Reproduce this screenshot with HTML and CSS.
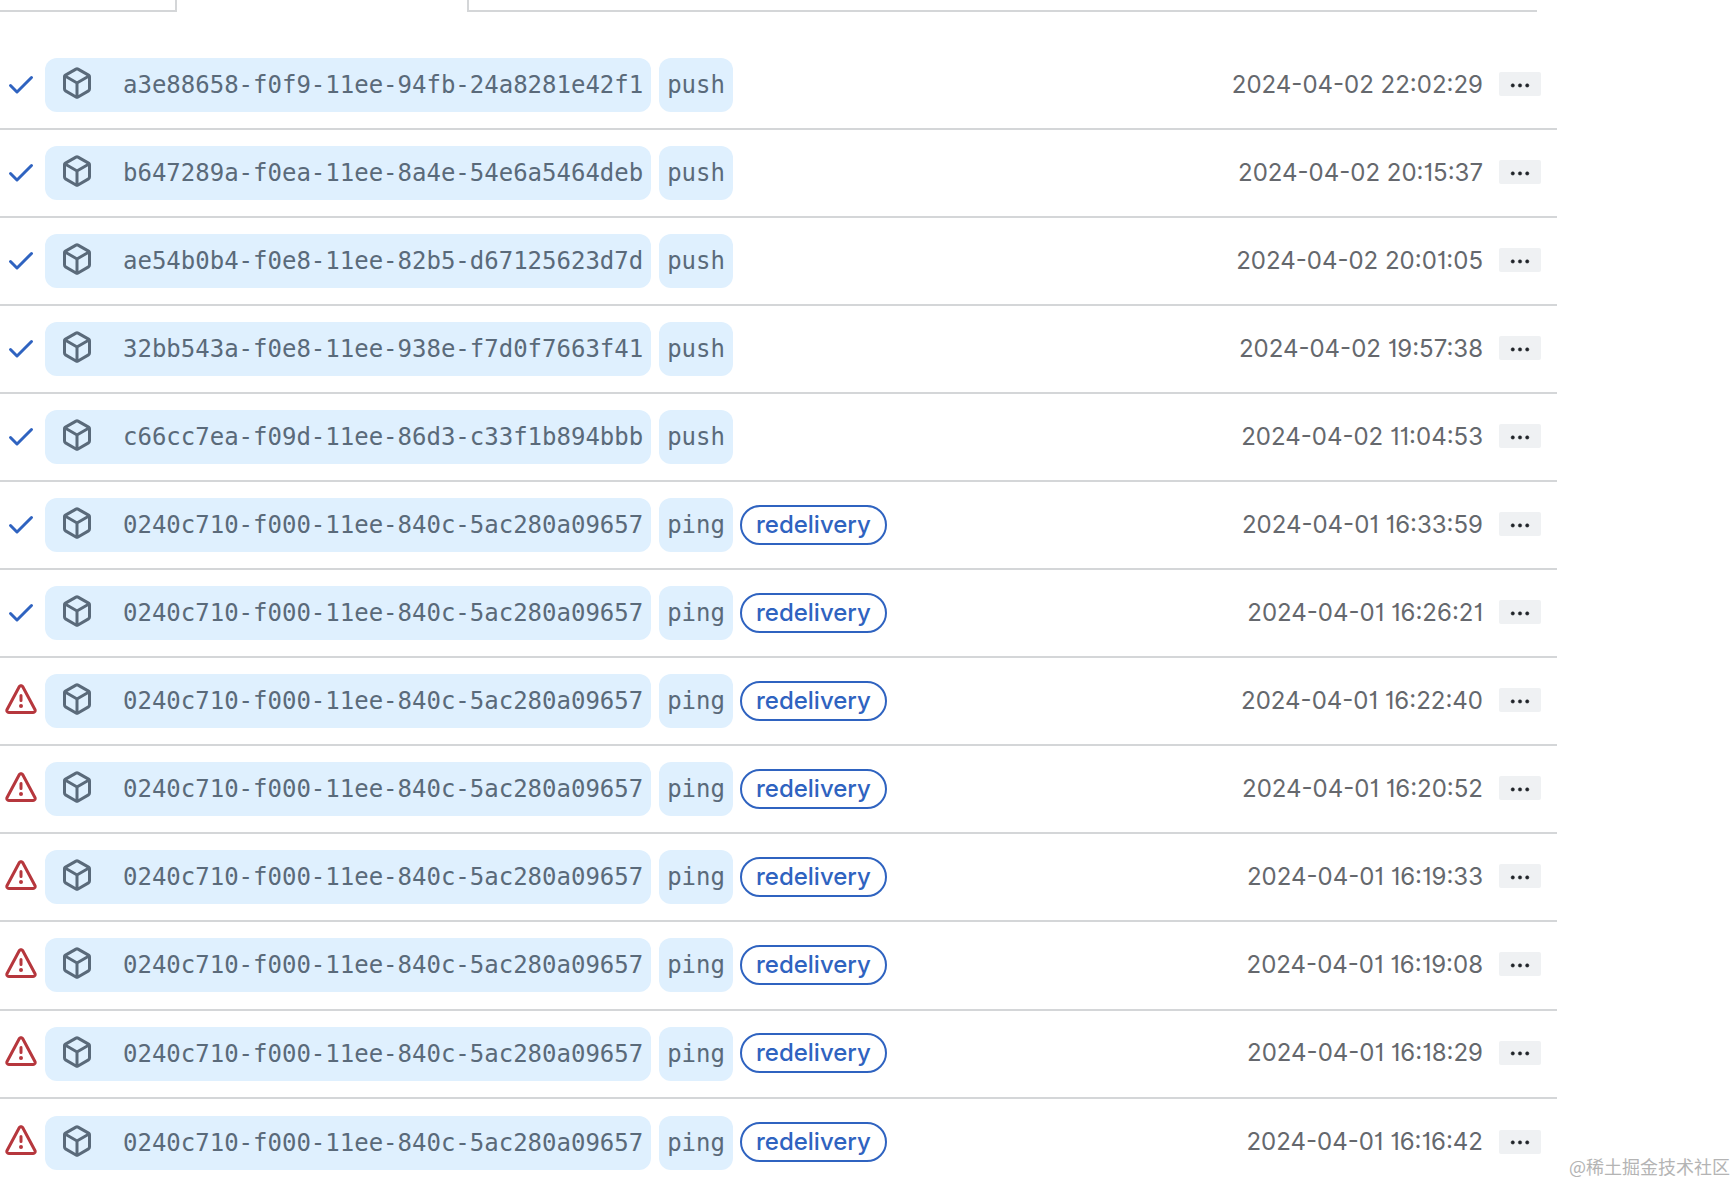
FILE: index.html
```html
<!DOCTYPE html>
<html lang="en">
<head>
<meta charset="utf-8">
<title>Recent Deliveries</title>
<link rel="stylesheet" href="styles.css">
</head>
<body>
<svg class="defs" width="0" height="0" aria-hidden="true">
  <symbol id="i-check" viewBox="0 0 16 16"><path d="M13.78 4.22a.75.75 0 0 1 0 1.06l-7.25 7.25a.75.75 0 0 1-1.06 0L2.22 9.28a.751.751 0 0 1 .018-1.042.751.751 0 0 1 1.042-.018L6 10.94l6.72-6.72a.75.75 0 0 1 1.06 0Z"/></symbol>
  <symbol id="i-alert" viewBox="0 0 16 16"><path d="M6.457 1.047c.659-1.234 2.427-1.234 3.086 0l6.082 11.378A1.75 1.75 0 0 1 14.082 15H1.918a1.75 1.75 0 0 1-1.543-2.575Zm1.763.707a.25.25 0 0 0-.44 0L1.698 13.132a.25.25 0 0 0 .22.368h12.164a.25.25 0 0 0 .22-.368Zm.53 3.996v2.5a.75.75 0 0 1-1.5 0v-2.5a.75.75 0 0 1 1.5 0ZM9 11a1 1 0 1 1-2 0 1 1 0 0 1 2 0Z"/></symbol>
  <symbol id="i-box" viewBox="0 0 16 16"><path d="m8.878.392 5.25 3.045c.54.314.872.89.872 1.514v6.098a1.75 1.75 0 0 1-.872 1.514l-5.25 3.045a1.75 1.75 0 0 1-1.756 0l-5.25-3.045A1.75 1.75 0 0 1 1 11.049V4.951c0-.624.332-1.201.872-1.514L7.122.392a1.75 1.75 0 0 1 1.756 0ZM7.875 1.69l-4.63 2.685L8 7.133l4.755-2.758-4.63-2.685a.248.248 0 0 0-.25 0ZM2.5 5.677v5.372c0 .09.047.171.125.216l4.625 2.683V8.432Zm6.25 8.271 4.625-2.683a.25.25 0 0 0 .125-.216V5.677L8.75 8.432Z"/></symbol>
  <symbol id="i-dots" viewBox="-1 0 18 16"><path d="M8 9a1.5 1.5 0 1 0 0-3 1.5 1.5 0 0 0 0 3ZM1.5 9a1.5 1.5 0 1 0 0-3 1.5 1.5 0 0 0 0 3Zm13 0a1.5 1.5 0 1 0 0-3 1.5 1.5 0 0 0 0 3Z"/></symbol>
</svg>
<div class="page">
  <div class="tabs"><div class="tab-left"></div><div class="tab-active"></div><div class="tab-right"></div></div>
  <ul class="list">
    <li class="row">
      <svg class="status ok"><use href="#i-check"/></svg>
      <span class="pill guid"><svg class="box"><use href="#i-box"/></svg>a3e88658-f0f9-11ee-94fb-24a8281e42f1</span>
      <span class="pill">push</span>
      <time class="when">2024-04-02 22:02:29</time>
      <button class="more" type="button"><svg class="dots"><use href="#i-dots"/></svg></button>
    </li>
    <li class="row">
      <svg class="status ok"><use href="#i-check"/></svg>
      <span class="pill guid"><svg class="box"><use href="#i-box"/></svg>b647289a-f0ea-11ee-8a4e-54e6a5464deb</span>
      <span class="pill">push</span>
      <time class="when">2024-04-02 20:15:37</time>
      <button class="more" type="button"><svg class="dots"><use href="#i-dots"/></svg></button>
    </li>
    <li class="row">
      <svg class="status ok"><use href="#i-check"/></svg>
      <span class="pill guid"><svg class="box"><use href="#i-box"/></svg>ae54b0b4-f0e8-11ee-82b5-d67125623d7d</span>
      <span class="pill">push</span>
      <time class="when">2024-04-02 20:01:05</time>
      <button class="more" type="button"><svg class="dots"><use href="#i-dots"/></svg></button>
    </li>
    <li class="row">
      <svg class="status ok"><use href="#i-check"/></svg>
      <span class="pill guid"><svg class="box"><use href="#i-box"/></svg>32bb543a-f0e8-11ee-938e-f7d0f7663f41</span>
      <span class="pill">push</span>
      <time class="when">2024-04-02 19:57:38</time>
      <button class="more" type="button"><svg class="dots"><use href="#i-dots"/></svg></button>
    </li>
    <li class="row">
      <svg class="status ok"><use href="#i-check"/></svg>
      <span class="pill guid"><svg class="box"><use href="#i-box"/></svg>c66cc7ea-f09d-11ee-86d3-c33f1b894bbb</span>
      <span class="pill">push</span>
      <time class="when">2024-04-02 11:04:53</time>
      <button class="more" type="button"><svg class="dots"><use href="#i-dots"/></svg></button>
    </li>
    <li class="row">
      <svg class="status ok"><use href="#i-check"/></svg>
      <span class="pill guid"><svg class="box"><use href="#i-box"/></svg>0240c710-f000-11ee-840c-5ac280a09657</span>
      <span class="pill">ping</span>
      <span class="tag">redelivery</span>
      <time class="when">2024-04-01 16:33:59</time>
      <button class="more" type="button"><svg class="dots"><use href="#i-dots"/></svg></button>
    </li>
    <li class="row">
      <svg class="status ok"><use href="#i-check"/></svg>
      <span class="pill guid"><svg class="box"><use href="#i-box"/></svg>0240c710-f000-11ee-840c-5ac280a09657</span>
      <span class="pill">ping</span>
      <span class="tag">redelivery</span>
      <time class="when">2024-04-01 16:26:21</time>
      <button class="more" type="button"><svg class="dots"><use href="#i-dots"/></svg></button>
    </li>
    <li class="row">
      <svg class="status bad"><use href="#i-alert"/></svg>
      <span class="pill guid"><svg class="box"><use href="#i-box"/></svg>0240c710-f000-11ee-840c-5ac280a09657</span>
      <span class="pill">ping</span>
      <span class="tag">redelivery</span>
      <time class="when">2024-04-01 16:22:40</time>
      <button class="more" type="button"><svg class="dots"><use href="#i-dots"/></svg></button>
    </li>
    <li class="row">
      <svg class="status bad"><use href="#i-alert"/></svg>
      <span class="pill guid"><svg class="box"><use href="#i-box"/></svg>0240c710-f000-11ee-840c-5ac280a09657</span>
      <span class="pill">ping</span>
      <span class="tag">redelivery</span>
      <time class="when">2024-04-01 16:20:52</time>
      <button class="more" type="button"><svg class="dots"><use href="#i-dots"/></svg></button>
    </li>
    <li class="row">
      <svg class="status bad"><use href="#i-alert"/></svg>
      <span class="pill guid"><svg class="box"><use href="#i-box"/></svg>0240c710-f000-11ee-840c-5ac280a09657</span>
      <span class="pill">ping</span>
      <span class="tag">redelivery</span>
      <time class="when">2024-04-01 16:19:33</time>
      <button class="more" type="button"><svg class="dots"><use href="#i-dots"/></svg></button>
    </li>
    <li class="row">
      <svg class="status bad"><use href="#i-alert"/></svg>
      <span class="pill guid"><svg class="box"><use href="#i-box"/></svg>0240c710-f000-11ee-840c-5ac280a09657</span>
      <span class="pill">ping</span>
      <span class="tag">redelivery</span>
      <time class="when">2024-04-01 16:19:08</time>
      <button class="more" type="button"><svg class="dots"><use href="#i-dots"/></svg></button>
    </li>
    <li class="row">
      <svg class="status bad"><use href="#i-alert"/></svg>
      <span class="pill guid"><svg class="box"><use href="#i-box"/></svg>0240c710-f000-11ee-840c-5ac280a09657</span>
      <span class="pill">ping</span>
      <span class="tag">redelivery</span>
      <time class="when">2024-04-01 16:18:29</time>
      <button class="more" type="button"><svg class="dots"><use href="#i-dots"/></svg></button>
    </li>
    <li class="row">
      <svg class="status bad"><use href="#i-alert"/></svg>
      <span class="pill guid"><svg class="box"><use href="#i-box"/></svg>0240c710-f000-11ee-840c-5ac280a09657</span>
      <span class="pill">ping</span>
      <span class="tag">redelivery</span>
      <time class="when">2024-04-01 16:16:42</time>
      <button class="more" type="button"><svg class="dots"><use href="#i-dots"/></svg></button>
    </li>
  </ul>
  <div class="watermark">@稀土掘金技术社区</div>
</div>
</body>
</html>
```
FILE: styles.css
```css
html, body {
  margin: 0;
  padding: 0;
  height: 100%;
  overflow: hidden;
  background: #fff;
}
.defs { position: absolute; }
.page {
  position: relative;
  height: 1182px;
  overflow: hidden;
  font-family: Inter, "Liberation Sans", sans-serif;
}
.tabs {
  display: flex;
  height: 12px;
  width: 1537px;
}
.tab-left {
  width: 177px;
  box-sizing: border-box;
  border-right: 2px solid #d4d6d8;
  border-bottom: 2px solid #d4d6d8;
}
.tab-active { width: 290px; }
.tab-right {
  flex: 1;
  border-left: 2px solid #d4d6d8;
  border-bottom: 2px solid #d4d6d8;
}
.list {
  list-style: none;
  margin: 30px 0 0;
  padding: 0;
  width: 1557px;
}
.row {
  display: flex;
  align-items: center;
  box-sizing: border-box;
  height: 88.05px;
  padding: 16px 16px 16px 5px;
  border-bottom: 2px solid #d4d6d8;
}
.row:last-child { border-bottom: 0; }
.status {
  width: 32px;
  height: 32px;
  margin: -3px 8px 0 0;
  flex: none;
}
.ok { fill: #2f63c0; }
.bad { fill: #b6373d; }
.pill {
  display: flex;
  align-items: center;
  box-sizing: border-box;
  height: 54px;
  padding: 0 8px;
  margin-right: 7px;
  border-radius: 12px;
  background: #dff0fe;
  color: #5a6a7a;
  font-family: "DejaVu Sans Mono", monospace;
  font-size: 24px;
}
.guid { padding-left: 16px; margin-right: 8px; }
.box {
  width: 32px;
  height: 32px;
  margin: -4px 30px 0 0;
  fill: #5a6a7a;
  flex: none;
}
.tag {
  box-sizing: border-box;
  height: 40px;
  line-height: 36px;
  padding: 0 14px;
  margin-top: -1px;
  border: 2px solid #2f63c0;
  border-radius: 20px;
  color: #2f63c0;
  font-size: 24px;
  font-weight: 500;
  white-space: nowrap;
}
.when {
  margin: -2px 0 0 auto;
  color: #65686d;
  font-size: 24px;
  font-feature-settings: "cv01";
  white-space: nowrap;
}
.more {
  display: flex;
  align-items: center;
  justify-content: center;
  width: 42px;
  height: 24px;
  margin: -2px 0 0 16px;
  padding: 0;
  border: 0;
  border-radius: 2px;
  background: #eff1f3;
}
.dots {
  width: 20px;
  height: 18px;
  margin-top: 3px;
  fill: #1f2328;
  stroke: #1f2328;
  stroke-width: .5;
}
.watermark {
  position: absolute;
  left: 1569px;
  top: 1153px;
  color: #b4b4b4;
  font-family: "Noto Sans CJK SC", sans-serif;
  font-size: 18px;
  line-height: 26px;
  white-space: nowrap;
}
```
